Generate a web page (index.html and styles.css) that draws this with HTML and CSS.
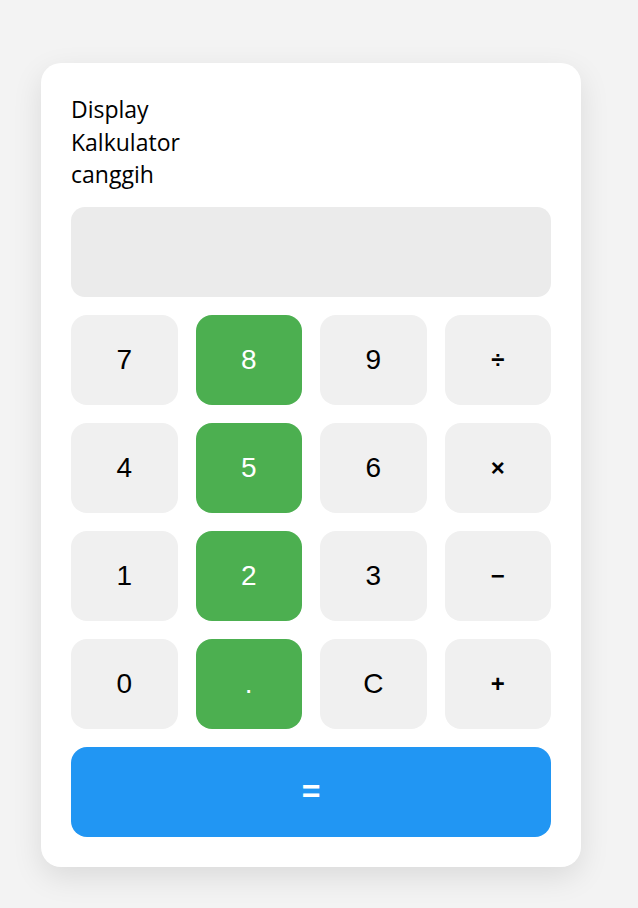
FILE: index.html
```html
<!DOCTYPE html>
<html lang="id">
<head>
<meta charset="utf-8">
<title>Kalkulator</title>
<link rel="stylesheet" href="styles.css">
</head>
<body>
<div class="calc">
  <h1 class="title">Display Kalkulator canggih</h1>
  <div class="display"></div>
  <div class="keys">
    <button class="key">7</button>
    <button class="key green">8</button>
    <button class="key">9</button>
    <button class="key op">÷</button>
    <button class="key">4</button>
    <button class="key green">5</button>
    <button class="key">6</button>
    <button class="key op">×</button>
    <button class="key">1</button>
    <button class="key green">2</button>
    <button class="key">3</button>
    <button class="key op">−</button>
    <button class="key">0</button>
    <button class="key green">.</button>
    <button class="key">C</button>
    <button class="key op">+</button>
    <button class="key equals">=</button>
  </div>
</div>
</body>
</html>
```
FILE: styles.css
```css
html, body {
  margin: 0;
  padding: 0;
}
body {
  background: #f3f3f3;
  font-family: "Liberation Sans", Arial, sans-serif;
  padding: 63px 0 41px 41px;
}
.calc {
  width: 480px;
  background: #ffffff;
  border-radius: 20px;
  padding: 30px;
  box-shadow: 0 10px 30px rgba(0, 0, 0, 0.1);
}
.title {
  font-family: "Open Sans", "Noto Sans", sans-serif;
  font-weight: 400;
  font-size: 23px;
  line-height: 32.5px;
  width: 130px;
  margin: 0 0 16px 0;
  color: #000;
}
.display {
  height: 90px;
  background: #ebebeb;
  border-radius: 14px;
  margin-bottom: 18px;
}
.keys {
  display: grid;
  grid-template-columns: repeat(4, 1fr);
  grid-auto-rows: 90px;
  gap: 18px;
}
.key {
  border: none;
  border-radius: 16px;
  background: #f0f0f0;
  color: #000;
  font-family: "Liberation Sans", Arial, sans-serif;
  font-size: 28px;
  padding: 0;
}
.key.op {
  font-size: 24px;
  font-weight: 700;
}
.key.green {
  background: #4caf50;
  color: #fff;
}
.key.equals {
  grid-column: 1 / -1;
  background: #2196f3;
  color: #fff;
  font-size: 32px;
  font-weight: 700;
}
```
